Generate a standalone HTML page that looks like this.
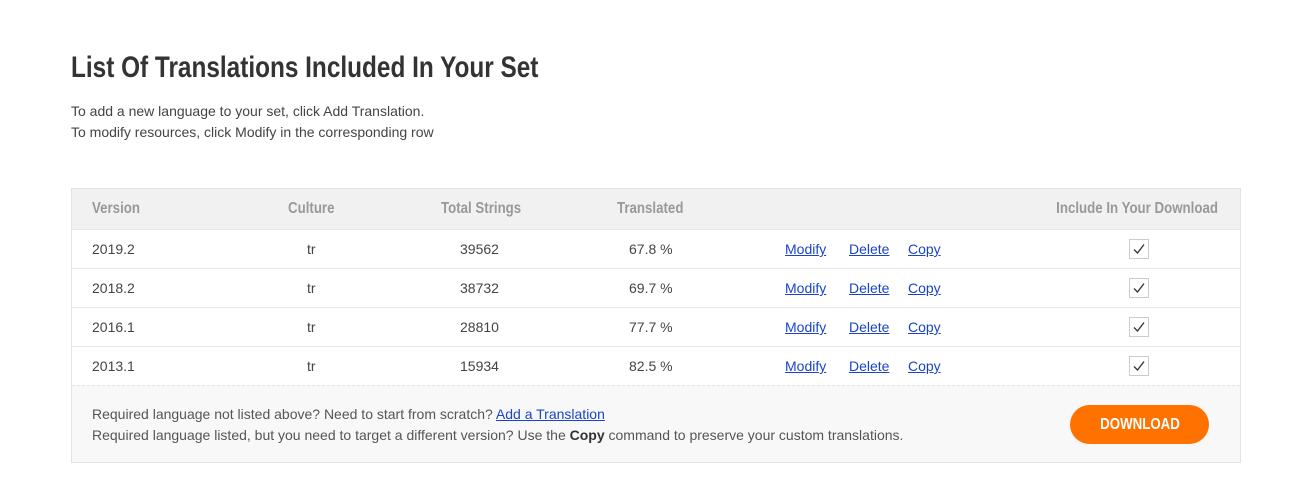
<!DOCTYPE html>
<html><head><meta charset="utf-8"><style>
body{margin:0;background:#fff;font-family:"Liberation Sans",sans-serif;color:#333;width:1315px;height:488px;position:relative;overflow:hidden}
.a{position:absolute;white-space:nowrap}
h1{position:absolute;left:71px;top:51px;margin:0;font-family:"Liberation Sans",sans-serif;font-weight:bold;font-size:30px;color:#333;white-space:nowrap;transform:scaleX(0.812);transform-origin:left}
.p{font-size:14px;color:#444}
.tbl{position:absolute;left:71px;top:188px;width:1168px;height:273px;border:1px solid #e3e3e3}
.hd{position:absolute;left:0;top:0;width:1168px;height:40px;background:#f1f1f1}
.h{position:absolute;top:11px;font-family:"Liberation Sans",sans-serif;font-weight:bold;font-size:16px;color:#999;white-space:nowrap;transform:scaleX(0.83);transform-origin:left}
.row{position:absolute;left:0;width:1168px;height:39px;border-top:1px solid #e8e8e8}
.c{position:absolute;top:11px;font-size:14px;color:#444;white-space:nowrap}
.l{color:#1a44c8;text-decoration:underline}
.cb{position:absolute;left:1057px;top:9px;width:18px;height:18px;border:1px solid #ccc;background:#fff}
.ft{position:absolute;left:0;top:196px;width:1168px;height:76px;background:#f8f8f8;border-top:1px dashed #e3e3e3}
.btn{position:absolute;left:998px;top:19px;width:139px;height:39px;border-radius:20px;background:#ff7200;color:#fff;font-weight:bold;font-size:16px;text-align:center;line-height:39px}
.btn span{display:inline-block;transform:scaleX(0.83)}
</style></head><body>
<h1>List Of Translations Included In Your Set</h1>
<div class="a p" style="left:71px;top:103px">To add a new language to your set, click Add Translation.</div>
<div class="a p" style="left:71px;top:124px">To modify resources, click Modify in the corresponding row</div>
<div class="tbl">
<div class="hd">
<span class="h" style="left:20px">Version</span>
<span class="h" style="left:216px">Culture</span>
<span class="h" style="left:369px">Total Strings</span>
<span class="h" style="left:545px">Translated</span>
<span class="h" style="right:22px;transform-origin:right">Include In Your Download</span>
</div>
<div class="row" style="top:40px"><span class="c" style="left:20px">2019.2</span><span class="c" style="left:235px">tr</span><span class="c" style="left:388px">39562</span><span class="c" style="left:557px">67.8 %</span><span class="c l" style="left:713px">Modify</span><span class="c l" style="left:777px">Delete</span><span class="c l" style="left:836px">Copy</span><span class="cb"><svg width="18" height="18"><path d="M4 9.5l3.5 3.5L14 4.5" fill="none" stroke="#333" stroke-width="1.3"/></svg></span></div>
<div class="row" style="top:79px"><span class="c" style="left:20px">2018.2</span><span class="c" style="left:235px">tr</span><span class="c" style="left:388px">38732</span><span class="c" style="left:557px">69.7 %</span><span class="c l" style="left:713px">Modify</span><span class="c l" style="left:777px">Delete</span><span class="c l" style="left:836px">Copy</span><span class="cb"><svg width="18" height="18"><path d="M4 9.5l3.5 3.5L14 4.5" fill="none" stroke="#333" stroke-width="1.3"/></svg></span></div>
<div class="row" style="top:118px"><span class="c" style="left:20px">2016.1</span><span class="c" style="left:235px">tr</span><span class="c" style="left:388px">28810</span><span class="c" style="left:557px">77.7 %</span><span class="c l" style="left:713px">Modify</span><span class="c l" style="left:777px">Delete</span><span class="c l" style="left:836px">Copy</span><span class="cb"><svg width="18" height="18"><path d="M4 9.5l3.5 3.5L14 4.5" fill="none" stroke="#333" stroke-width="1.3"/></svg></span></div>
<div class="row" style="top:157px"><span class="c" style="left:20px">2013.1</span><span class="c" style="left:235px">tr</span><span class="c" style="left:388px">15934</span><span class="c" style="left:557px">82.5 %</span><span class="c l" style="left:713px">Modify</span><span class="c l" style="left:777px">Delete</span><span class="c l" style="left:836px">Copy</span><span class="cb"><svg width="18" height="18"><path d="M4 9.5l3.5 3.5L14 4.5" fill="none" stroke="#333" stroke-width="1.3"/></svg></span></div>
<div class="ft">
<span class="c" style="left:20px;top:20px;color:#555">Required language not listed above? Need to start from scratch? <span class="l">Add a Translation</span></span>
<span class="c" style="left:20px;top:41px;color:#555">Required language listed, but you need to target a different version? Use the <b style="color:#333">Copy</b> command to preserve your custom translations.</span>
<div class="btn"><span>DOWNLOAD</span></div>
</div>
</div>
</body></html>
